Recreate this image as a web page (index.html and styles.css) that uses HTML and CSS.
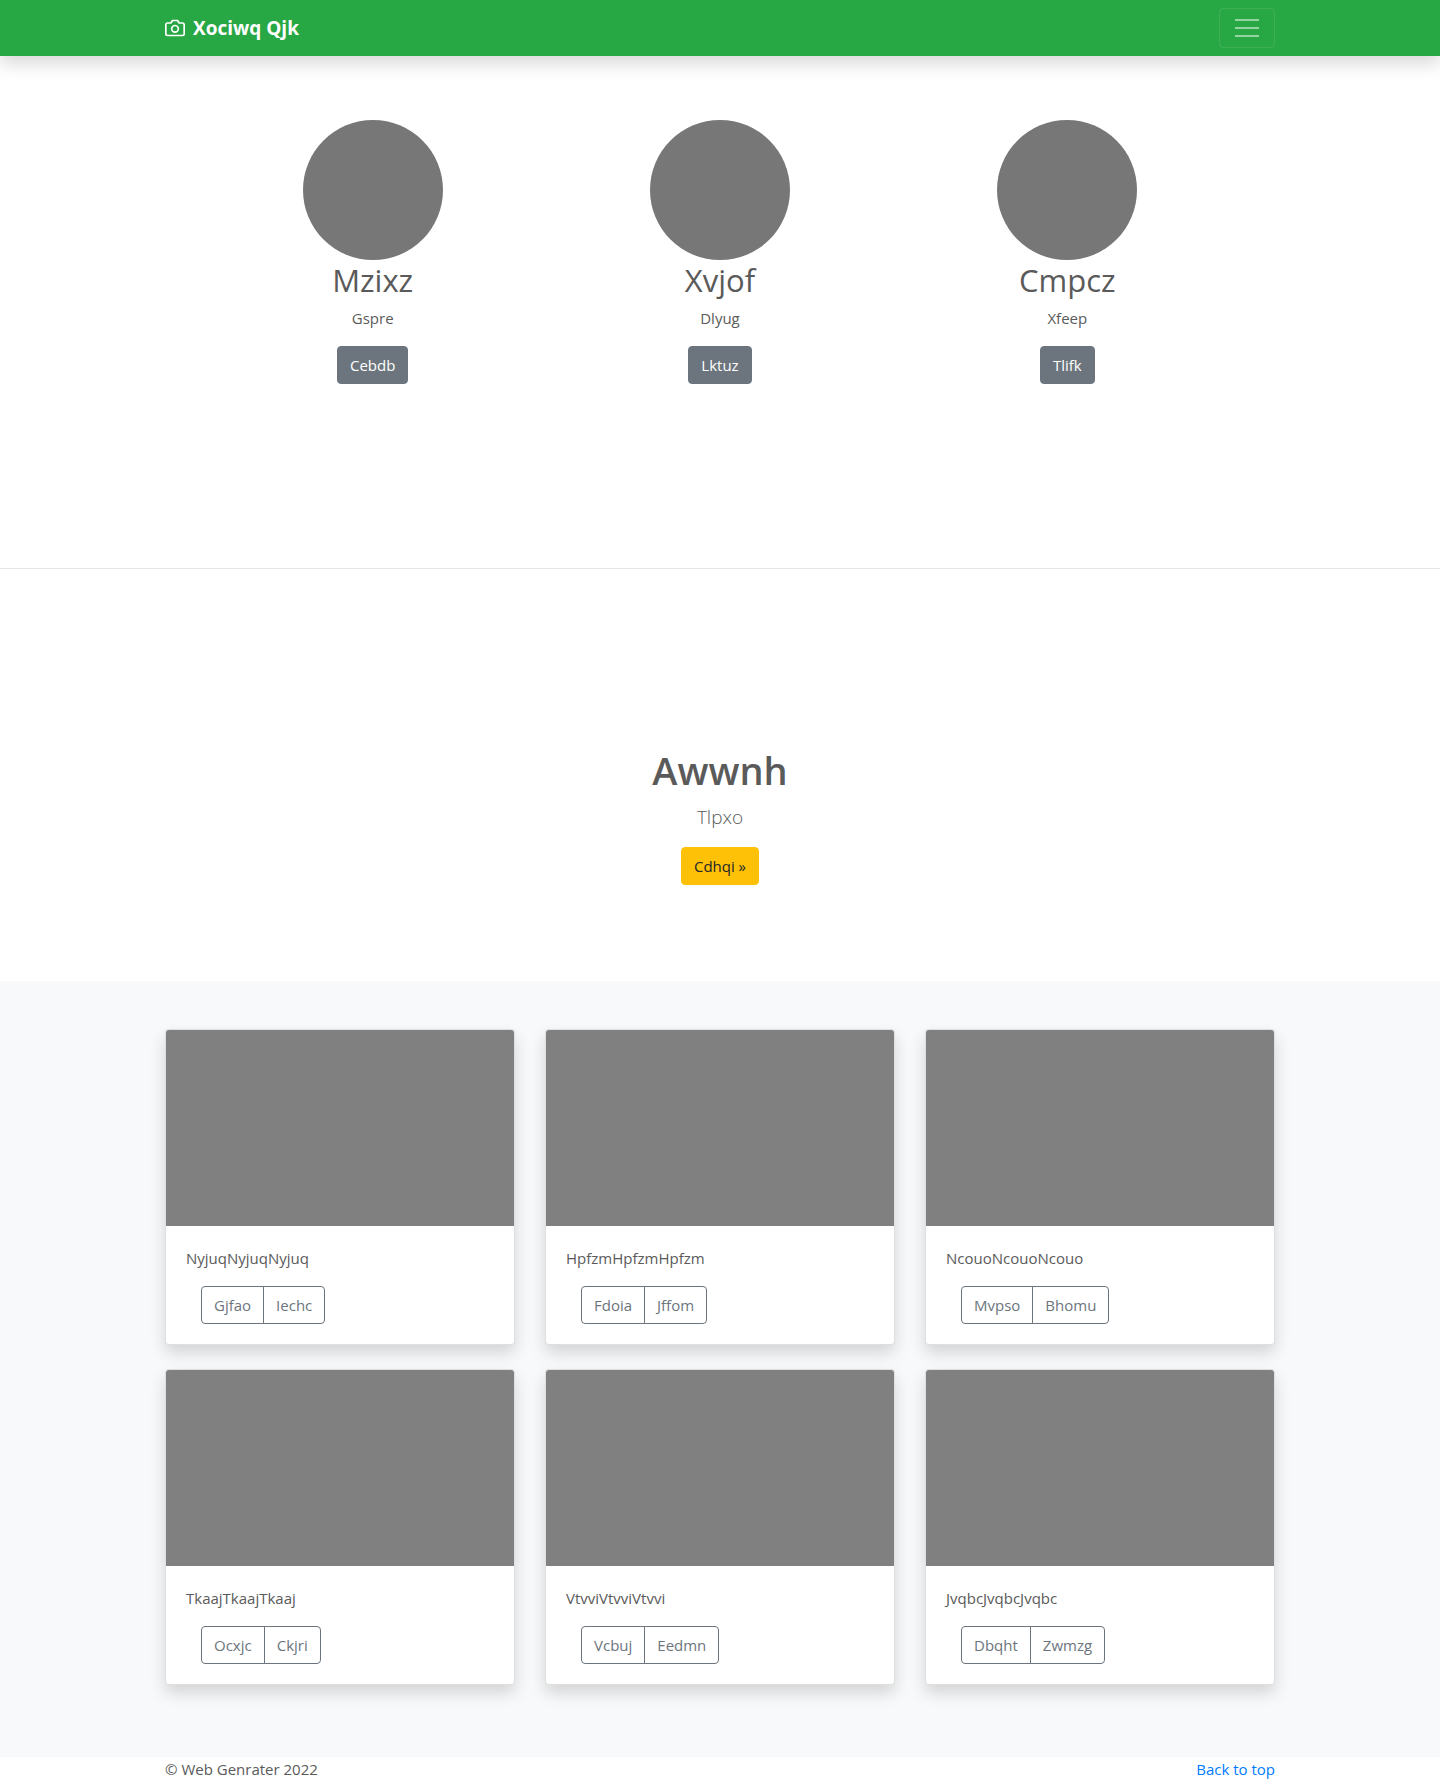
FILE: index.html
```html
<!DOCTYPE html>
<html lang="en">
<head>
  <meta charset="utf-8">
  <meta name="viewport" content="width=device-width, initial-scale=1">
  <title>Xociwq Qjk</title>
  <link rel="stylesheet" href="styles.css">
</head>
<body>
  <header class="navbar" id="top">
    <div class="container navbar-inner">
      <a class="brand" href="#top">
        <svg class="brand-icon" viewBox="0 0 24 24" width="20" height="20" fill="none" stroke="currentColor" stroke-width="2" stroke-linecap="round" stroke-linejoin="round" aria-hidden="true"><path d="M23 19a2 2 0 0 1-2 2H3a2 2 0 0 1-2-2V8a2 2 0 0 1 2-2h4l2-3h6l2 3h4a2 2 0 0 1 2 2z"/><circle cx="12" cy="13" r="4"/></svg>
        <strong>Xociwq Qjk</strong>
      </a>
      <button class="toggler" type="button" aria-label="Toggle navigation">
        <svg viewBox="0 0 30 30" width="30" height="30" stroke="rgba(255,255,255,.5)" stroke-width="2" stroke-miterlimit="10" aria-hidden="true"><path d="M3 7h24M3 15h24M3 23h24"/></svg>
      </button>
    </div>
  </header>

  <main>
    <section class="features">
      <div class="feature">
        <div class="avatar"></div>
        <h2>Mzixz</h2>
        <p>Gspre</p>
        <a class="btn btn-secondary" href="#">Cebdb</a>
      </div>
      <div class="feature">
        <div class="avatar"></div>
        <h2>Xvjof</h2>
        <p>Dlyug</p>
        <a class="btn btn-secondary" href="#">Lktuz</a>
      </div>
      <div class="feature">
        <div class="avatar"></div>
        <h2>Cmpcz</h2>
        <p>Xfeep</p>
        <a class="btn btn-secondary" href="#">Tlifk</a>
      </div>
    </section>

    <section class="hero">
      <h1>Awwnh</h1>
      <p class="lead">Tlpxo</p>
      <a class="btn btn-warning" href="#">Cdhqi »</a>
    </section>

    <section class="album">
      <div class="container cards">
        <article class="card">
          <div class="card-image"></div>
          <div class="card-body">
            <p>NyjuqNyjuqNyjuq</p>
            <div class="btn-group"><button class="btn btn-outline" type="button">Gjfao</button><button class="btn btn-outline" type="button">Iechc</button></div>
          </div>
        </article>
        <article class="card">
          <div class="card-image"></div>
          <div class="card-body">
            <p>HpfzmHpfzmHpfzm</p>
            <div class="btn-group"><button class="btn btn-outline" type="button">Fdoia</button><button class="btn btn-outline" type="button">Jffom</button></div>
          </div>
        </article>
        <article class="card">
          <div class="card-image"></div>
          <div class="card-body">
            <p>NcouoNcouoNcouo</p>
            <div class="btn-group"><button class="btn btn-outline" type="button">Mvpso</button><button class="btn btn-outline" type="button">Bhomu</button></div>
          </div>
        </article>
        <article class="card">
          <div class="card-image"></div>
          <div class="card-body">
            <p>TkaajTkaajTkaaj</p>
            <div class="btn-group"><button class="btn btn-outline" type="button">Ocxjc</button><button class="btn btn-outline" type="button">Ckjri</button></div>
          </div>
        </article>
        <article class="card">
          <div class="card-image"></div>
          <div class="card-body">
            <p>VtvviVtvviVtvvi</p>
            <div class="btn-group"><button class="btn btn-outline" type="button">Vcbuj</button><button class="btn btn-outline" type="button">Eedmn</button></div>
          </div>
        </article>
        <article class="card">
          <div class="card-image"></div>
          <div class="card-body">
            <p>JvqbcJvqbcJvqbc</p>
            <div class="btn-group"><button class="btn btn-outline" type="button">Dbqht</button><button class="btn btn-outline" type="button">Zwmzg</button></div>
          </div>
        </article>
      </div>
    </section>
  </main>

  <footer class="container footer">
    <span>© Web Genrater 2022</span>
    <a href="#top">Back to top</a>
  </footer>
</body>
</html>
```
FILE: styles.css
```css
*, *::before, *::after {
  box-sizing: border-box;
}

body {
  margin: 0;
  background: #fff;
  color: #5a5a5a;
  font-family: "Segoe UI", "Open Sans", "Noto Sans", sans-serif;
  font-size: 15px;
  line-height: 24px;
}

h1, h2, p {
  margin: 0;
}

a {
  color: #007bff;
  text-decoration: none;
}

.container {
  width: 100%;
  max-width: 1140px;
  margin: 0 auto;
  padding: 0 15px;
}

/* Navigation bar */
.navbar {
  position: relative;
  background: #28a745;
  box-shadow: 0 8px 16px rgba(0, 0, 0, .15);
}

.navbar-inner {
  display: flex;
  align-items: center;
  justify-content: space-between;
  min-height: 56px;
}

.brand {
  display: flex;
  align-items: center;
  gap: 8px;
  color: #fff;
  font-size: 19px;
  line-height: 32px;
}

.toggler {
  display: flex;
  align-items: center;
  justify-content: center;
  width: 56px;
  height: 40px;
  padding: 0;
  background: transparent;
  border: 1px solid rgba(255, 255, 255, .1);
  border-radius: 4px;
}

/* Buttons */
.btn {
  display: inline-block;
  padding: 6px 12px;
  border: 1px solid transparent;
  border-radius: 4px;
  font: inherit;
  text-align: center;
  cursor: pointer;
}

.btn-secondary {
  background: #6c757d;
  border-color: #6c757d;
  color: #fff;
}

.btn-warning {
  background: #ffc107;
  border-color: #ffc107;
  color: #212529;
}

.btn-outline {
  background: transparent;
  border-color: #6c757d;
  color: #6c757d;
}

.btn-group {
  display: flex;
  padding-left: 15px;
}

.btn-group .btn:first-child {
  border-radius: 4px 0 0 4px;
}

.btn-group .btn:last-child {
  margin-left: -1px;
  border-radius: 0 4px 4px 0;
}

/* Three round portraits */
.features {
  display: grid;
  grid-template-columns: repeat(3, 1fr);
  max-width: 1042px;
  margin: 0 auto;
  padding: 64px 0 184px;
}

.feature {
  display: flex;
  flex-direction: column;
  align-items: center;
}

.avatar {
  width: 140px;
  height: 140px;
  border-radius: 50%;
  background: #777;
}

.feature h2 {
  margin-bottom: 6px;
  font-size: 31px;
  font-weight: 400;
  line-height: 40px;
}

.feature p {
  margin-bottom: 16px;
}

/* Call to action */
.hero {
  display: flex;
  flex-direction: column;
  align-items: center;
  padding: 176px 15px 96px;
  border-top: 1px solid #e5e5e5;
}

.hero h1 {
  margin-bottom: 6px;
  font-size: 38px;
  font-weight: 600;
  line-height: 50px;
}

.lead {
  margin-bottom: 14px;
  font-size: 19px;
  font-weight: 300;
  line-height: 32px;
}

/* Card album */
.album {
  padding: 48px 0 72px;
  background: #f8f9fa;
}

.cards {
  display: grid;
  grid-template-columns: repeat(3, 1fr);
  gap: 24px 30px;
}

.card {
  background: #fff;
  border: 1px solid rgba(0, 0, 0, .125);
  border-radius: 4px;
  box-shadow: 0 8px 16px rgba(0, 0, 0, .15);
}

.card-image {
  height: 196px;
  border-radius: 3px 3px 0 0;
  background: #808080;
}

.card-body {
  padding: 20px;
}

.card-body p {
  margin-bottom: 16px;
}

/* Footer */
.footer {
  display: flex;
  justify-content: space-between;
}
```
